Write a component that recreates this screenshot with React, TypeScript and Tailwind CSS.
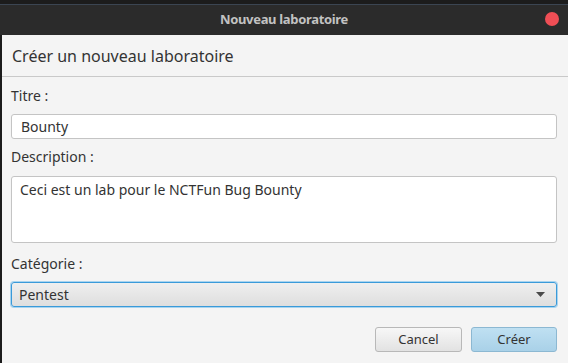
import { FC } from "react";

const font = { fontFamily: '"Noto Sans", "DejaVu Sans", sans-serif' };

const Label: FC<{ text: string; className?: string }> = ({ text, className }) => (
  <div className={`h-4 leading-4 text-[14px] text-[#333333] ${className ?? ""}`}>{text}</div>
);

export default function App() {
  return (
    <div className="w-[568px] h-[363px] bg-[#1c1c1c] flex flex-col overflow-hidden" style={font}>
      <div className="h-[4px] shrink-0" />
      <div className="h-[31px] shrink-0 bg-[#2b2b2b] border-t border-[#3b4552] flex items-center justify-center relative">
        <span className="text-[13px] font-bold text-[#c2c2c2] tracking-tight">Nouveau laboratoire</span>
        <span className="absolute right-[9px] top-[7px] w-[14px] h-[14px] rounded-full bg-[#ef4e55]" />
      </div>
      <div className="flex-1 ml-[2px] bg-[#f4f4f4] flex flex-col">
        <div className="h-[42px] shrink-0 px-[10px] flex items-center border-b border-[#c9c9c9]">
          <span className="text-[16px] text-[#333333]">Créer un nouveau laboratoire</span>
        </div>
        <div className="flex flex-col pt-[11px] pl-[9px] pr-[11px]">
          <Label text="Titre :" />
          <div className="mt-[10px] h-[25px] bg-white border border-[#c4c4c4] rounded-[3px] flex items-center pl-[9px] text-[14px] text-[#333333]">
            Bounty
          </div>
          <Label text="Description :" className="mt-[10px]" />
          <div className="mt-[11px] h-[67px] bg-white border border-[#c4c4c4] rounded-[3px] pl-[8px] pt-[2px] text-[14px] text-[#333333]">
            Ceci est un lab pour le NCTFun Bug Bounty
          </div>
          <Label text="Catégorie :" className="mt-[13px]" />
          <div className="mt-[10px] h-[25px] rounded-[3px] border border-[#3a9ad9] shadow-[0_0_0_1px_#a9d4ef] bg-gradient-to-b from-[#efefef] to-[#dedede] flex items-center pl-[7px] pr-[11px] text-[14px] text-[#333333]">
            <span className="flex-1">Pentest</span>
            <svg width="9" height="5" viewBox="0 0 9 5">
              <path d="M0 0 L9 0 L4.5 5 Z" fill="#4a4a4a" />
            </svg>
          </div>
          <div className="mt-[20px] flex justify-end gap-[9px]">
            <button className="w-[87px] h-[25px] rounded-[3px] border border-[#b8b8b8] bg-gradient-to-b from-[#f7f7f7] to-[#e2e2e2] text-[13px] text-[#333333]">
              Cancel
            </button>
            <button className="w-[86px] h-[25px] rounded-[3px] border border-[#8cb8d2] bg-gradient-to-b from-[#bfe0f2] to-[#a9d1e8] text-[13px] text-[#333333]">
              Créer
            </button>
          </div>
        </div>
      </div>
    </div>
  );
}
